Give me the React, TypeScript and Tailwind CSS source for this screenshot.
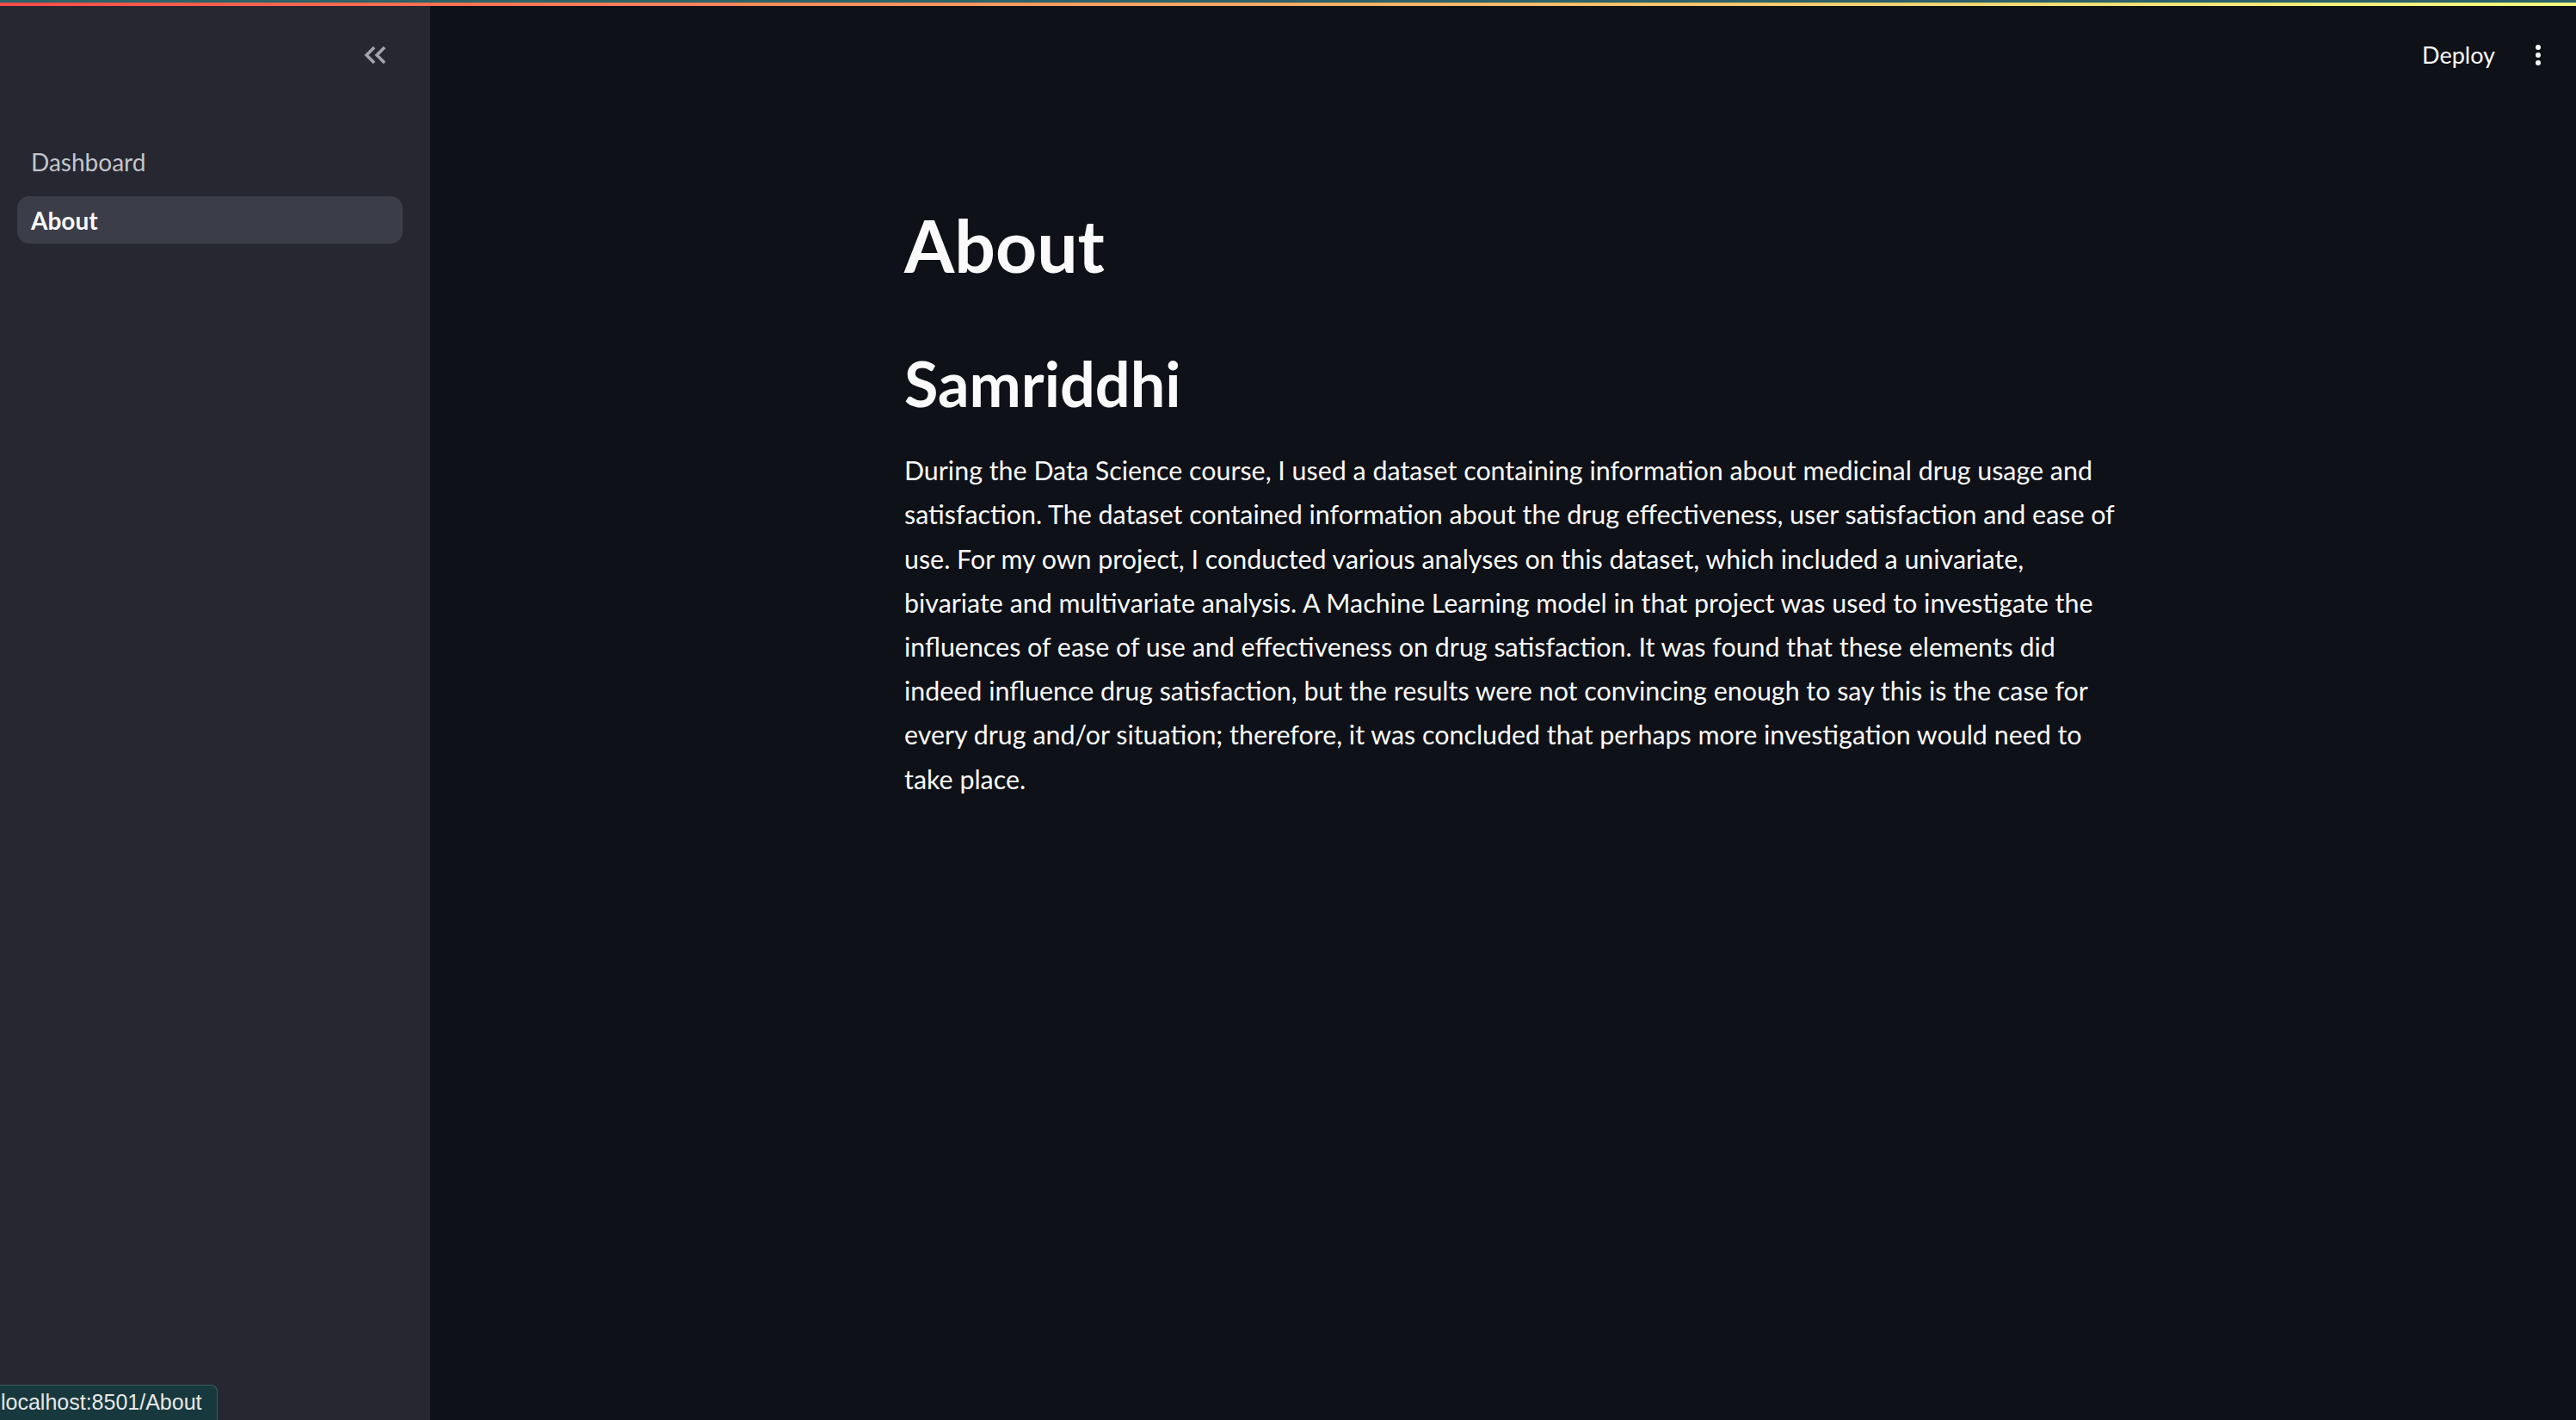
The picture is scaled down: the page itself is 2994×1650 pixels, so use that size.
import React from "react";

const lines = [
  "During the Data Science course, I used a dataset containing information about medicinal drug usage and",
  "satisfaction. The dataset contained information about the drug effectiveness, user satisfaction and ease of",
  "use. For my own project, I conducted various analyses on this dataset, which included a univariate,",
  "bivariate and multivariate analysis. A Machine Learning model in that project was used to investigate the",
  "influences of ease of use and effectiveness on drug satisfaction. It was found that these elements did",
  "indeed influence drug satisfaction, but the results were not convincing enough to say this is the case for",
  "every drug and/or situation; therefore, it was concluded that perhaps more investigation would need to",
  "take place.",
];

export default function App() {
  return (
    <div
      className="relative flex h-[1650px] w-[2994px] flex-col overflow-hidden bg-[#0e1117] text-[#fafafa]"
      style={{ fontFamily: "Lato, 'Noto Sans', sans-serif" }}
    >
      <div className="h-[3px] w-full bg-[#2d6266]" />
      <div className="h-[4px] w-full bg-gradient-to-r from-[#ff4b4b] to-[#fffd80]" />
      <div className="flex flex-1">
        {/* Sidebar */}
        <aside className="flex w-[500px] flex-col bg-[#262730]">
          <div className="flex h-[114px] items-center justify-end pr-[51px]">
            <svg width="26" height="22" viewBox="0 0 26 22" fill="none" stroke="#a3a3aa" strokeWidth="3.6" strokeLinecap="butt" strokeLinejoin="miter">
              <path d="M12 2 L3 11 L12 20" />
              <path d="M24 2 L15 11 L24 20" />
            </svg>
          </div>
          <nav className="ml-[20px] mr-[32px] mt-[39px] flex flex-col gap-[13px]">
            <div className="flex h-[55px] items-center rounded-[14px] pl-[16px] text-[28px] text-[#c4c5cb]">
              Dashboard
            </div>
            <div className="flex h-[55px] items-center rounded-[14px] bg-[#3b3d48] pl-[16px] text-[28px] font-bold text-[#fafafa]">
              About
            </div>
          </nav>
        </aside>
        {/* Main */}
        <main className="flex flex-1 flex-col">
          <div className="flex h-[114px] items-center justify-end gap-[47px] pr-[41px]">
            <span className="text-[27px] text-[#fafafa]">Deploy</span>
            <div className="flex flex-col items-center gap-[3px]">
              <span className="h-[6px] w-[6px] rounded-full bg-[#fafafa]" />
              <span className="h-[6px] w-[6px] rounded-full bg-[#fafafa]" />
              <span className="h-[6px] w-[6px] rounded-full bg-[#fafafa]" />
            </div>
          </div>
          <div className="ml-[551px] w-[1408px]">
            <h1 className="mt-[114px] text-[84px] font-bold leading-[1.2]">About</h1>
            <h2 className="mt-[66px] text-[72px] font-bold leading-[1.2]">Samriddhi</h2>
            <p className="mt-[33px] text-[30.4px] leading-[51.2px]">
              {lines.map((l, i) => (
                <span key={i} className="block whitespace-nowrap">
                  {l}
                </span>
              ))}
            </p>
          </div>
        </main>
      </div>
      {/* link tooltip */}
      <div
        className="absolute bottom-0 left-0 flex h-[41px] w-[253px] items-center rounded-tr-[8px] border-t border-r border-[#3d5a5f] bg-[#17383d] text-[25px] text-[#e6e8e8]"
        style={{ fontFamily: "'Liberation Sans', Arial, sans-serif" }}
      >
        <span className="ml-[1px]">localhost:8501/About</span>
      </div>
    </div>
  );
}
